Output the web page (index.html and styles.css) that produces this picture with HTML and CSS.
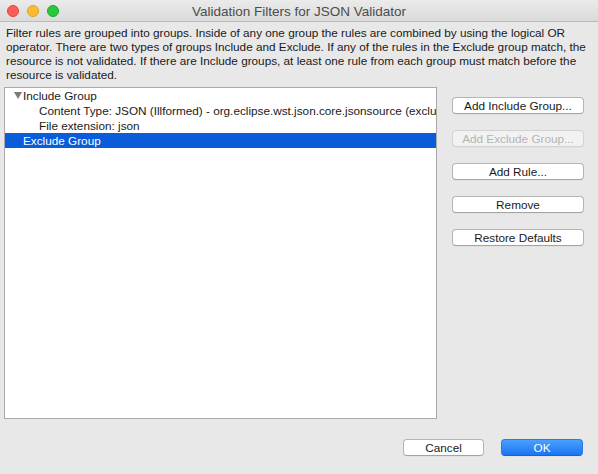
FILE: index.html
```html
<!DOCTYPE html>
<html>
<head>
<meta charset="utf-8">
<link rel="stylesheet" href="styles.css">
</head>
<body>
<div class="window">
  <div class="titlebar">
    <div class="lights">
      <span class="light red"></span>
      <span class="light yellow"></span>
      <span class="light green"></span>
    </div>
    <div class="title">Validation Filters for JSON Validator</div>
  </div>
  <div class="content">
    <div class="desc">
      <div class="line">Filter rules are grouped into groups. Inside of any one group the rules are combined by using the logical OR</div>
      <div class="line">operator. There are two types of groups Include and Exclude. If any of the rules in the Exclude group match, the</div>
      <div class="line">resource is not validated. If there are Include groups, at least one rule from each group must match before the</div>
      <div class="line">resource is validated.</div>
    </div>
    <div class="main">
      <div class="tree">
        <div class="row group"><span class="twisty"></span><span class="label">Include Group</span></div>
        <div class="row child"><span class="label">Content Type: JSON (Illformed) - org.eclipse.wst.json.core.jsonsource (exclude)</span></div>
        <div class="row child"><span class="label">File extension: json</span></div>
        <div class="row group selected"><span class="label">Exclude Group</span></div>
      </div>
      <div class="side">
        <button class="btn">Add Include Group...</button>
        <button class="btn disabled">Add Exclude Group...</button>
        <button class="btn">Add Rule...</button>
        <button class="btn">Remove</button>
        <button class="btn">Restore Defaults</button>
      </div>
    </div>
    <div class="footer">
      <button class="btn fbtn">Cancel</button>
      <button class="btn fbtn primary">OK</button>
    </div>
  </div>
</div>
</body>
</html>
```
FILE: styles.css
```css
* { box-sizing: border-box; }
html, body { margin: 0; padding: 0; }
body {
  width: 598px;
  height: 474px;
  overflow: hidden;
  font-family: "Liberation Sans", Arial, sans-serif;
  font-size: 11.75px;
  color: #1a1a1a;
  background: #e8e8e8;
}
.window {
  width: 598px;
  height: 474px;
  display: flex;
  flex-direction: column;
  background: #e8e8e8;
}
.titlebar {
  height: 22px;
  flex: none;
  position: relative;
  background: linear-gradient(#ebebeb, #dadada);
  border-bottom: 1px solid #bcbcbc;
  display: flex;
  align-items: center;
  justify-content: center;
}
.lights {
  position: absolute;
  left: 7px;
  top: 5px;
  display: flex;
  gap: 8px;
}
.light {
  width: 12px;
  height: 12px;
  border-radius: 50%;
  display: block;
}
.red { background: #fc5f57; border: 1px solid #e0443e; }
.yellow { background: #fdbc2e; border: 1px solid #dea123; }
.green { background: #28c83f; border: 1px solid #1aab29; }
.title {
  font-size: 13.5px;
  color: #4c4c4c;
  padding-top: 1px;
}
.content {
  flex: 1;
  display: flex;
  flex-direction: column;
  padding: 4px 0 0 0;
}
.desc {
  padding-left: 6px;
  line-height: 14px;
  white-space: nowrap;
}
.main {
  display: flex;
  margin-top: 5px;
}
.tree {
  margin-left: 4px;
  width: 433px;
  height: 332px;
  background: #fff;
  border: 1px solid #ababab;
  overflow: hidden;
}
.row {
  height: 15px;
  line-height: 15px;
  white-space: nowrap;
  display: flex;
  align-items: center;
  padding-left: 18px;
}
.row.child { padding-left: 34px; }
.twisty {
  flex: none;
  width: 0;
  height: 0;
  border-left: 4px solid transparent;
  border-right: 4px solid transparent;
  border-top: 7px solid #7b7b7b;
  margin-left: -9px;
  margin-right: 1px;
}
.row.selected {
  background: #0b5cdb;
  color: #fff;
}
.side {
  margin-left: 15px;
  padding-top: 10px;
  display: flex;
  flex-direction: column;
  gap: 16px;
}
.btn {
  font-family: "Liberation Sans", Arial, sans-serif;
  font-size: 11.75px;
  color: #1a1a1a;
  background: #fff;
  border: 1px solid #b5b5b5;
  border-bottom-color: #a4a4a4;
  border-radius: 4px;
  width: 132px;
  height: 17px;
  padding: 0;
  line-height: 15px;
  box-shadow: 0 0.5px 0 rgba(0,0,0,0.05);
}
.btn.disabled {
  color: #b4b4b4;
  background: #f2f2f2;
  border-color: #d2d2d2;
}
.footer {
  display: flex;
  justify-content: flex-end;
  gap: 17px;
  padding-right: 15px;
  margin-top: 20px;
}
.fbtn { width: 81px; }
.primary {
  width: 82px;
  color: #fff;
  background: linear-gradient(#4aa0fd, #1b74f3);
  border-color: #2a7be8;
  border-bottom-color: #1561d6;
}
```
